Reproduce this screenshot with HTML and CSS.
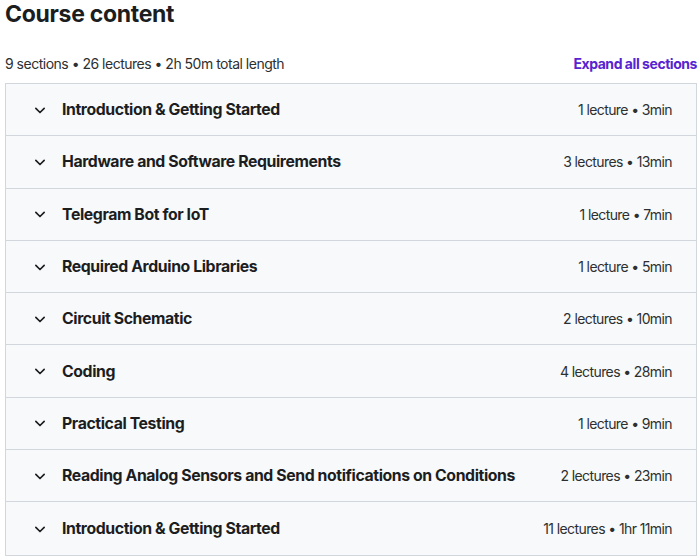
FILE: index.html
```html
<!DOCTYPE html>
<html lang="en">
<head>
<meta charset="utf-8">
<title>Course content</title>
<link rel="stylesheet" href="styles.css">
</head>
<body>
<div class="page">
  <h2 class="heading">Course content</h2>
  <div class="summary">
    <span class="summary-text">9 sections • 26 lectures • 2h 50m total length</span>
    <button class="expand">Expand all sections</button>
  </div>
  <div class="sections">
    <div class="section"><span class="chev"><svg viewBox="0 0 24 24"><path d="M7 10l5 5 5-5"/></svg></span><span class="title">Introduction &amp; Getting Started</span><span class="meta">1 lecture • 3min</span></div>
    <div class="section"><span class="chev"><svg viewBox="0 0 24 24"><path d="M7 10l5 5 5-5"/></svg></span><span class="title">Hardware and Software Requirements</span><span class="meta">3 lectures • 13min</span></div>
    <div class="section"><span class="chev"><svg viewBox="0 0 24 24"><path d="M7 10l5 5 5-5"/></svg></span><span class="title">Telegram Bot for IoT</span><span class="meta">1 lecture • 7min</span></div>
    <div class="section"><span class="chev"><svg viewBox="0 0 24 24"><path d="M7 10l5 5 5-5"/></svg></span><span class="title">Required Arduino Libraries</span><span class="meta">1 lecture • 5min</span></div>
    <div class="section"><span class="chev"><svg viewBox="0 0 24 24"><path d="M7 10l5 5 5-5"/></svg></span><span class="title">Circuit Schematic</span><span class="meta">2 lectures • 10min</span></div>
    <div class="section"><span class="chev"><svg viewBox="0 0 24 24"><path d="M7 10l5 5 5-5"/></svg></span><span class="title">Coding</span><span class="meta">4 lectures • 28min</span></div>
    <div class="section"><span class="chev"><svg viewBox="0 0 24 24"><path d="M7 10l5 5 5-5"/></svg></span><span class="title">Practical Testing</span><span class="meta">1 lecture • 9min</span></div>
    <div class="section"><span class="chev"><svg viewBox="0 0 24 24"><path d="M7 10l5 5 5-5"/></svg></span><span class="title">Reading Analog Sensors and Send notifications on Conditions</span><span class="meta">2 lectures • 23min</span></div>
    <div class="section"><span class="chev"><svg viewBox="0 0 24 24"><path d="M7 10l5 5 5-5"/></svg></span><span class="title">Introduction &amp; Getting Started</span><span class="meta">11 lectures • 1hr 11min</span></div>
  </div>
</div>
</body>
</html>
```

FILE: styles.css
```css
* { box-sizing: border-box; }
html, body { margin: 0; padding: 0; background: #ffffff; }
body {
  font-family: "Inter", "Roboto", "Liberation Sans", sans-serif;
  color: #2d2f31;
}
.page {
  padding: 0 3px 0 5px;
}
.heading {
  margin: 0;
  font-size: 23px;
  line-height: 28px;
  font-weight: 700;
  letter-spacing: -0.3px;
  color: #1c1d1f;
}
.summary {
  display: flex;
  justify-content: space-between;
  align-items: center;
  margin-top: 25px;
  height: 20px;
  margin-bottom: 10px;
}
.summary-text {
  font-size: 14px;
  color: #2d2f31;
  letter-spacing: -0.5px;
}
.expand {
  border: none;
  background: none;
  padding: 0;
  font-family: inherit;
  font-size: 14px;
  font-weight: 700;
  color: #5624d0;
  letter-spacing: -0.45px;
  cursor: pointer;
}
.sections {
  border: 1px solid #d1d7dc;
}
.section {
  display: flex;
  align-items: center;
  height: 52.3px;
  padding: 0 24px 0 24px;
  background: #f7f9fa;
  border-bottom: 1px solid #d1d7dc;
}
.section:last-child { border-bottom: none; }
.chev {
  width: 20px;
  height: 20px;
  margin-right: 12px;
  display: flex;
  align-items: center;
  justify-content: center;
}
.chev svg {
  width: 20px;
  height: 20px;
  fill: none;
  stroke: #1c1d1f;
  stroke-width: 2;
  stroke-linecap: round;
  stroke-linejoin: round;
}
.title {
  flex: 1;
  font-size: 15.8px;
  font-weight: 700;
  letter-spacing: -0.4px;
  color: #1c1d1f;
}
.meta {
  font-size: 14px;
  letter-spacing: -0.6px;
  color: #2d2f31;
}
```
